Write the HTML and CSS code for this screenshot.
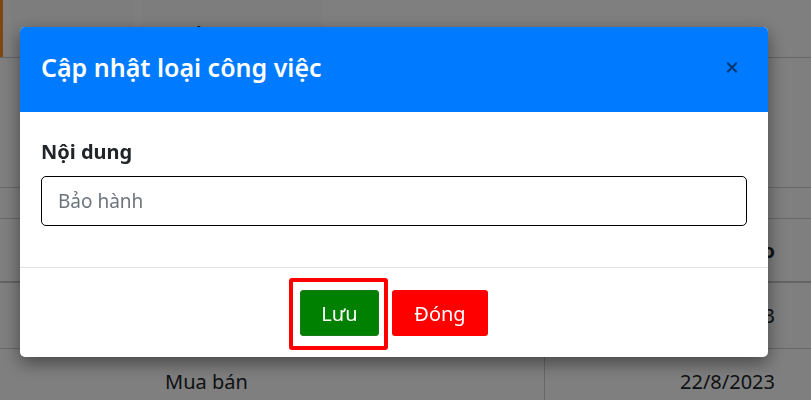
FILE: index.html
```html
<!DOCTYPE html>
<html lang="vi">
<head>
<meta charset="utf-8">
<title>Cập nhật loại công việc</title>
<link rel="stylesheet" href="styles.css">
</head>
<body>
<div class="page">
  <div class="tabs">
    <div class="tab tab-active"></div>
    <div class="tab">Tình trạng</div>
    <div class="tab">Quản lý tình trạng</div>
  </div>
  <div class="toolbar"></div>
  <div class="filter"></div>
  <div class="thead">
    <div class="cell cell-left"></div>
    <div class="cell cell-right th">Ngày tạo</div>
  </div>
  <div class="row">
    <div class="cell cell-left">Bảo hành</div>
    <div class="cell cell-right">22/8/2023</div>
  </div>
  <div class="row row-split">
    <div class="cell cell-left">Mua bán</div>
    <div class="cell cell-right">22/8/2023</div>
  </div>
</div>

<div class="backdrop"></div>

<div class="modal">
  <div class="modal-header">
    <h2 class="modal-title">Cập nhật loại công việc</h2>
    <button class="btn-close" aria-label="Đóng">
      <svg width="10" height="11" viewBox="0 0 10 11"><path d="M1 1.5 L9 9.5 M9 1.5 L1 9.5" stroke="currentColor" stroke-width="2" stroke-linecap="square"/></svg>
    </button>
  </div>
  <div class="modal-body">
    <label class="form-label">Nội dung</label>
    <div class="form-control">Bảo hành</div>
  </div>
  <div class="modal-footer">
    <div class="highlight-wrap">
      <button class="btn btn-save">Lưu</button>
      <span class="highlight"></span>
    </div>
    <button class="btn btn-close-red">Đóng</button>
  </div>
</div>
</body>
</html>
```

FILE: styles.css
```css
* { box-sizing: border-box; }

html, body {
  margin: 0;
  padding: 0;
  height: 100%;
  overflow: hidden;
  font-family: "Noto Sans", "Open Sans", sans-serif;
  color: #212529;
  background: #fff;
}

.page {
  width: 811px;
  height: 400px;
  display: flex;
  flex-direction: column;
}

.page > * { flex-shrink: 0; }

.tabs {
  display: flex;
  gap: 8px;
  height: 58px;
  border-bottom: 1px solid #ccc;
}

.tab {
  width: 122px;
  padding-top: 23px;
  padding-left: 26px;
  font-size: 19px;
  background: #fafafa;
  color: #222;
}

.tab:nth-child(3) { width: 182px; }

.tab-active {
  width: 3px;
  padding: 0;
  background: #ff8c1a;
}

.toolbar {
  height: 130px;
  border-bottom: 1px solid #d0d0d0;
}

.filter {
  height: 31px;
  border-bottom: 1px solid #d0d0d0;
}

.thead, .row {
  display: flex;
  border-bottom: 1px solid #d0d0d0;
  font-size: 20px;
}

.thead { height: 64px; border-bottom: 2px solid #c8c8c8; }

.row { height: 66px; }

.cell {
  display: flex;
  align-items: center;
}

.cell-left {
  width: 545px;
  padding-left: 165px;
}

.cell-right {
  flex: 1;
  justify-content: flex-end;
  padding-right: 36px;
}

.row-split .cell-left { border-right: 1px solid #d0d0d0; }

.th { font-weight: 700; }

.backdrop {
  position: fixed;
  inset: 0;
  background: rgba(0, 0, 0, 0.5);
}

.modal {
  position: fixed;
  left: 20px;
  top: 27px;
  width: 748px;
  background: #fff;
  border-radius: 5px;
  overflow: hidden;
  box-shadow: 0 6px 18px rgba(0, 0, 0, 0.45);
}

.modal-header {
  display: flex;
  align-items: center;
  justify-content: space-between;
  height: 85px;
  padding: 0 31px 6px 21px;
  background: #007bff;
}

.modal-title {
  margin: 0;
  font-size: 25px;
  font-weight: 600;
  color: #fff;
  line-height: 36px;
}

.btn-close {
  display: flex;
  padding: 0;
  border: 0;
  background: none;
  color: rgba(0, 0, 0, 0.55);
  margin-top: 2px;
}

.modal-body {
  padding: 26px 21px 41px;
  display: flex;
  flex-direction: column;
  gap: 10px;
}

.form-label {
  font-size: 20px;
  font-weight: 700;
  line-height: 28px;
  color: #212529;
}

.form-control {
  height: 50px;
  border: 1px solid #000;
  border-radius: 5px;
  padding: 0 16px;
  display: flex;
  align-items: center;
  font-size: 19px;
  color: #6c757d;
}

.modal-footer {
  border-top: 1px solid #dee2e6;
  display: flex;
  justify-content: center;
  gap: 13px;
  padding: 22px 0 21px;
}

.highlight-wrap {
  position: relative;
  display: flex;
}

.highlight {
  position: absolute;
  left: -11px;
  right: -9px;
  top: -12px;
  bottom: -14px;
  border: 4px solid #ff0000;
  border-radius: 3px;
  pointer-events: none;
}

.btn {
  height: 46px;
  border: 1px solid transparent;
  border-radius: 3px;
  font-family: inherit;
  font-size: 20px;
  color: #fff;
  padding: 0;
}

.btn-save {
  width: 79px;
  background: #008000;
  border-color: #1a7a1a;
}

.btn-close-red {
  width: 96px;
  background: #ff0000;
}
```
